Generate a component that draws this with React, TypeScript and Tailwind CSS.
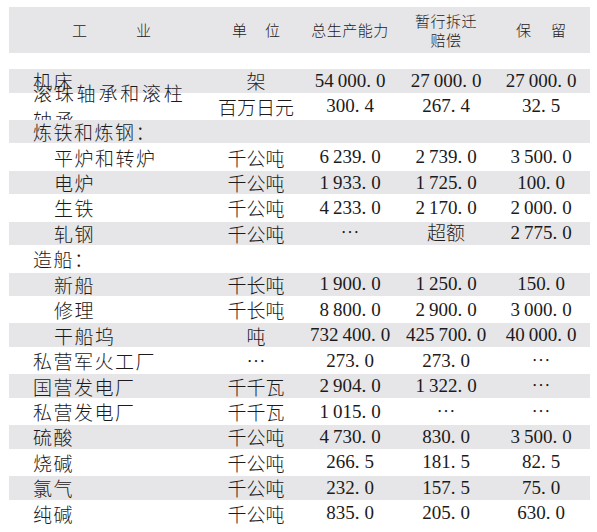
import * as React from "react";

type Row = {
  name: string;
  sub?: boolean;
  wide?: boolean;
  unit?: string;
  total?: string;
  temp?: string;
  keep?: string;
};

const ROWS: Row[] = [
  { name: "机床", unit: "架", total: "54 000.0", temp: "27 000.0", keep: "27 000.0" },
  { name: "滚珠轴承和滚柱\n轴承", wide: true, unit: "百万日元", total: "300.4", temp: "267.4", keep: "32.5" },
  { name: "炼铁和炼钢：" },
  { name: "平炉和转炉", sub: true, unit: "千公吨", total: "6 239.0", temp: "2 739.0", keep: "3 500.0" },
  { name: "电炉", sub: true, unit: "千公吨", total: "1 933.0", temp: "1 725.0", keep: "100.0" },
  { name: "生铁", sub: true, unit: "千公吨", total: "4 233.0", temp: "2 170.0", keep: "2 000.0" },
  { name: "轧钢", sub: true, unit: "千公吨", total: "…", temp: "超额", keep: "2 775.0" },
  { name: "造船：" },
  { name: "新船", sub: true, unit: "千长吨", total: "1 900.0", temp: "1 250.0", keep: "150.0" },
  { name: "修理", sub: true, unit: "千长吨", total: "8 800.0", temp: "2 900.0", keep: "3 000.0" },
  { name: "干船坞", sub: true, unit: "吨", total: "732 400.0", temp: "425 700.0", keep: "40 000.0" },
  { name: "私营军火工厂", unit: "…", total: "273.0", temp: "273.0", keep: "…" },
  { name: "国营发电厂", unit: "千千瓦", total: "2 904.0", temp: "1 322.0", keep: "…" },
  { name: "私营发电厂", unit: "千千瓦", total: "1 015.0", temp: "…", keep: "…" },
  { name: "硫酸", unit: "千公吨", total: "4 730.0", temp: "830.0", keep: "3 500.0" },
  { name: "烧碱", unit: "千公吨", total: "266.5", temp: "181.5", keep: "82.5" },
  { name: "氯气", unit: "千公吨", total: "232.0", temp: "157.5", keep: "75.0" },
  { name: "纯碱", unit: "千公吨", total: "835.0", temp: "205.0", keep: "630.0" },
];

const CJK = "font-['Noto_Sans_CJK_SC',sans-serif] font-light";

// numbers are set in a serif face; thousands gap and the gap after the point are narrow
function Num({ v }: { v?: string }) {
  if (!v) return null;
  if (!/^[\d .]+$/.test(v)) {
    return <span className={`${CJK} text-[19px]`}>{v}</span>;
  }
  const [intPart, dec] = v.split(".");
  const groups = intPart.split(" ");
  return (
    <span className="font-['Liberation_Serif',serif] text-[19px] whitespace-nowrap">
      {groups.map((g, i) => (
        <span key={i} className={i > 0 ? "ml-[4px]" : ""}>
          {g}
        </span>
      ))}
      .<span className="ml-[5px]">{dec}</span>
    </span>
  );
}

export default function App() {
  return (
    <div className="w-[597px] h-[532px] overflow-hidden bg-white text-[#1c1a1b] pt-[7px]">
      <div className="ml-[9px] w-[581px]">
        <div className={`flex h-[46px] items-center bg-[#e6e6e8] text-[15px] ${CJK}`}>
          <div className="w-[203px] flex justify-center gap-[49px] pl-[2px]">
            <span>工</span>
            <span>业</span>
          </div>
          <div className="w-[88px] flex justify-center gap-[18px]">
            <span>单</span>
            <span>位</span>
          </div>
          <div className="w-[100px] text-center tracking-[0.5px]">总生产能力</div>
          <div className="w-[92px] text-center leading-[19px] tracking-[0.5px]">
            <div>暂行拆迁</div>
            <div>赔偿</div>
          </div>
          <div className="flex-1 flex justify-center gap-[20px]">
            <span>保</span>
            <span>留</span>
          </div>
        </div>

        <div className="h-[16px]" />

        {ROWS.map((r, i) => (
          <div
            key={i}
            className={`relative flex items-center ${i % 2 === 0 ? "h-[23.5px] bg-[#e6e6e8]" : "h-[27.4px] bg-white"}`}
          >
            <div
              className={`w-[203px] ${CJK} text-[19px] whitespace-pre ${r.sub ? "pl-[45px]" : "pl-[24px]"} ${
                r.wide ? "leading-[27px] tracking-[2.8px]" : "leading-[23px] tracking-[1.5px]"
              }`}
            >
              {r.name}
            </div>
            <div className={`w-[88px] text-center ${CJK} text-[19px] leading-[23px]`}>{r.unit}</div>
            <div className="w-[100px] text-center leading-[23px]">
              <Num v={r.total} />
            </div>
            <div className="w-[92px] text-center leading-[23px]">
              <Num v={r.temp} />
            </div>
            <div className="flex-1 text-center leading-[23px]">
              <Num v={r.keep} />
            </div>
          </div>
        ))}
      </div>
    </div>
  );
}
